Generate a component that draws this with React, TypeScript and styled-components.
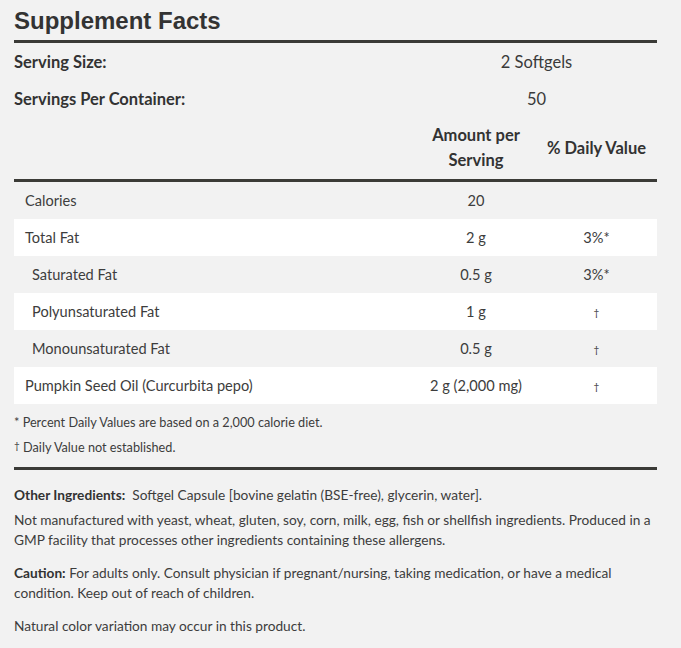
import React from "react";
import styled, { createGlobalStyle } from "styled-components";

const GlobalStyle = createGlobalStyle`
  html, body {
    margin: 0;
    padding: 0;
    background: #f2f2f2;
  }
  body {
    font-family: Lato, "Noto Sans", sans-serif;
    color: #3a3a3a;
  }
`;

const Page = styled.div`
  width: 643px;
  padding: 7px 24px 20px 14px;
  background: #f2f2f2;
`;

const Title = styled.h1`
  margin: 0 0 5px;
  font-family: "Liberation Sans", Arial, sans-serif;
  font-size: 24px;
  line-height: 28px;
  font-weight: 700;
  color: #333;
`;

const Rule = styled.div<{ $gap?: number }>`
  height: 3px;
  background: #3b3b37;
  margin-top: ${(p) => p.$gap ?? 0}px;
`;

const Grid = styled.div`
  display: grid;
  grid-template-columns: 402px 120px 121px;
`;

const InfoLabel = styled.div`
  height: 37px;
  display: flex;
  align-items: center;
  font-size: 16.5px;
  font-weight: 700;
  color: #333;
`;

const InfoValue = styled.div`
  grid-column: 2 / 4;
  height: 37px;
  display: flex;
  align-items: center;
  justify-content: center;
  font-size: 16.5px;
  color: #3a3a3a;
`;

const HeadCell = styled.div`
  height: 62px;
  display: flex;
  align-items: center;
  justify-content: center;
  text-align: center;
  font-size: 16.5px;
  line-height: 25px;
  font-weight: 700;
  color: #333;
`;

const Row = styled.div<{ $shade: boolean }>`
  display: contents;
  & > div {
    background: ${(p) => (p.$shade ? "#ffffff" : "transparent")};
  }
`;

const Cell = styled.div<{ $indent?: boolean; $center?: boolean }>`
  height: 37px;
  display: flex;
  align-items: center;
  justify-content: ${(p) => (p.$center ? "center" : "flex-start")};
  padding-left: ${(p) => (p.$center ? 0 : p.$indent ? 18 : 11)}px;
  font-size: 14.6px;
  color: #3d3d3d;
`;

const Dagger = styled.span<{ $raised?: boolean }>`
  font-size: 10px;
  line-height: 1;
  vertical-align: ${(p) => (p.$raised ? "3px" : "baseline")};
`;

const Notes = styled.div`
  padding-top: 6px;
  font-size: 12.7px;
  line-height: 25px;
  color: #3d3d3d;
`;

const Para = styled.p<{ $gap: number }>`
  margin: ${(p) => p.$gap}px 0 0;
  font-size: 13.7px;
  line-height: 20px;
  color: #3d3d3d;
`;

const Strong = styled.b`
  font-weight: 700;
  color: #333;
`;

type Nutrient = {
  name: string;
  amount: string;
  dv: string;
  indent?: boolean;
};

const rows: Nutrient[] = [
  { name: "Calories", amount: "20", dv: "" },
  { name: "Total Fat", amount: "2 g", dv: "3%*" },
  { name: "Saturated Fat", amount: "0.5 g", dv: "3%*", indent: true },
  { name: "Polyunsaturated Fat", amount: "1 g", dv: "†", indent: true },
  { name: "Monounsaturated Fat", amount: "0.5 g", dv: "†", indent: true },
  { name: "Pumpkin Seed Oil (Curcurbita pepo)", amount: "2 g (2,000 mg)", dv: "†" },
];

export default function App() {
  return (
    <Page>
      <GlobalStyle />
      <Title>Supplement Facts</Title>
      <Rule />
      <Grid>
        <InfoLabel>Serving Size:</InfoLabel>
        <InfoValue>2 Softgels</InfoValue>
        <InfoLabel>Servings Per Container:</InfoLabel>
        <InfoValue>50</InfoValue>
        <HeadCell />
        <HeadCell>
          Amount per
          <br />
          Serving
        </HeadCell>
        <HeadCell>% Daily Value</HeadCell>
      </Grid>
      <Rule />
      <Grid>
        {rows.map((r, i) => (
          <Row key={r.name} $shade={i % 2 === 1}>
            <Cell $indent={r.indent}>{r.name}</Cell>
            <Cell $center>{r.amount}</Cell>
            <Cell $center>
              {r.dv === "†" ? <Dagger>†</Dagger> : r.dv}
            </Cell>
          </Row>
        ))}
      </Grid>
      <Notes>
        <div>* Percent Daily Values are based on a 2,000 calorie diet.</div>
        <div>
          <Dagger $raised>†</Dagger> Daily Value not established.
        </div>
      </Notes>
      <Rule $gap={7} />
      <Para $gap={15}>
        <Strong>Other Ingredients:</Strong>&nbsp; Softgel Capsule [bovine gelatin
        (BSE-free), glycerin, water].
      </Para>
      <Para $gap={5}>
        Not manufactured with yeast, wheat, gluten, soy, corn, milk, egg, fish or
        shellfish ingredients. Produced in a GMP facility that processes other
        ingredients containing these allergens.
      </Para>
      <Para $gap={13}>
        <Strong>Caution:</Strong> For adults only. Consult physician if
        pregnant/nursing, taking medication, or have a medical condition. Keep out
        of reach of children.
      </Para>
      <Para $gap={13}>Natural color variation may occur in this product.</Para>
    </Page>
  );
}
